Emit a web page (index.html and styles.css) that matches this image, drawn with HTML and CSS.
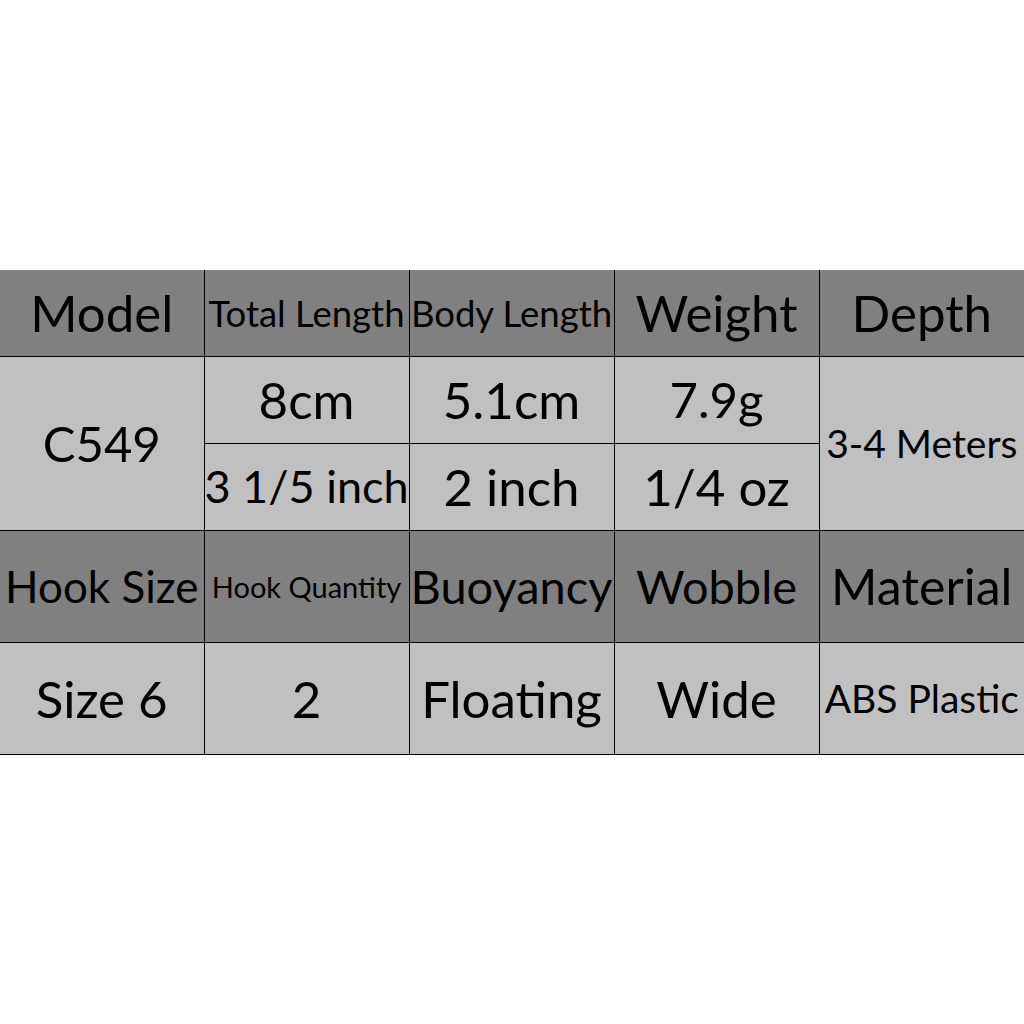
FILE: index.html
```html
<!DOCTYPE html>
<html>
<head>
<meta charset="utf-8">
<link rel="stylesheet" href="styles.css">
</head>
<body>
<table class="spec">
  <colgroup>
    <col class="c1"><col class="c2"><col class="c3"><col class="c4"><col class="c5">
  </colgroup>
  <tr class="head r1">
    <td class="xl">Model</td>
    <td class="md">Total Length</td>
    <td class="md">Body Length</td>
    <td class="xl">Weight</td>
    <td class="xl">Depth</td>
  </tr>
  <tr class="data r2">
    <td class="xs" rowspan="2">C549</td>
    <td class="xl">8cm</td>
    <td class="xl">5.1cm</td>
    <td class="xs">7.9g</td>
    <td class="md2" rowspan="2">3-4 Meters</td>
  </tr>
  <tr class="data r3">
    <td class="lg">3 1/5 inch</td>
    <td class="xl">2 inch</td>
    <td class="xl">1/4 oz</td>
  </tr>
  <tr class="head r4">
    <td class="lg3">Hook Size</td>
    <td class="sm">Hook Quantity</td>
    <td class="lg2">Buoyancy</td>
    <td class="lg2">Wobble</td>
    <td class="lg4">Material</td>
  </tr>
  <tr class="data r5">
    <td class="xl">Size 6</td>
    <td class="xl">2</td>
    <td class="xl">Floating</td>
    <td class="xl">Wide</td>
    <td class="md2">ABS Plastic</td>
  </tr>
</table>
</body>
</html>
```
FILE: styles.css
```css
html, body {
  margin: 0;
  padding: 0;
  background: #ffffff;
}
body {
  padding-top: 270px;
  font-family: Lato, "Open Sans", sans-serif;
  color: #000;
}
.spec {
  width: 1024px;
  table-layout: fixed;
  border-collapse: collapse;
}
.c1 { width: 204px; }
.c2, .c3, .c4, .c5 { width: 205px; }
.spec td {
  padding: 0;
  text-align: center;
  vertical-align: middle;
  white-space: nowrap;
  border: 1px solid #000;
  line-height: 1;
  overflow: visible;
}
.spec tr td:first-child { border-left: none; }
.spec tr td:last-child { border-right: none; }
.spec tr.r1 td { border-top: none; }
.spec tr.r3 td:last-child { border-right: 1px solid #000; }
.head td { background: #808080; }
.data td { background: #c0c0c0; }
.r1 { height: 86px; }
.r2 { height: 87px; }
.r3 { height: 87px; }
.r4 { height: 112px; }
.r5 { height: 112px; }
.xl { font-size: 51px; }
.xs { font-size: 49px; }
.lg { font-size: 45px; }
.lg2 { font-size: 47px; }
.lg3 { font-size: 44px; }
.lg4 { font-size: 50px; }
.md { font-size: 36.5px; }
.md2 { font-size: 39px; }
.sm { font-size: 29px; }
```
